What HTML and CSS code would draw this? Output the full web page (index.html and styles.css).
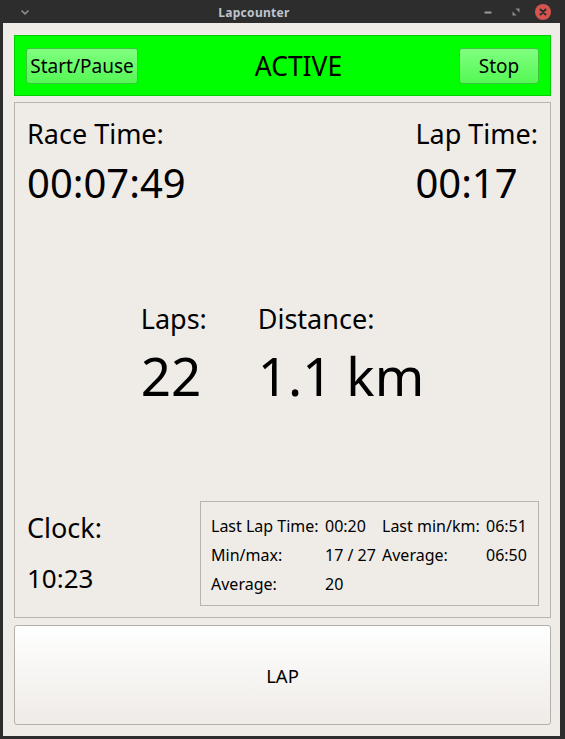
FILE: index.html
```html
<!DOCTYPE html>
<html>
<head>
<meta charset="utf-8">
<link rel="stylesheet" href="styles.css">
</head>
<body>
<div class="window">
  <div class="titlebar">
    <svg class="tb-menu" width="10" height="7" viewBox="0 0 10 7"><path d="M1.5 1.5 L5 4.8 L8.5 1.5" fill="none" stroke="#8e8e8e" stroke-width="1.6"/></svg>
    <div class="tb-title">Lapcounter</div>
    <div class="tb-controls">
      <svg class="ic-min" width="8" height="8" viewBox="0 0 8 8"><rect x="0.5" y="3.5" width="7" height="2" fill="#9c9c9c"/></svg>
      <svg class="ic-max" width="8" height="8" viewBox="0 0 8 8"><path d="M3.5 0.5 H7.5 V4.5 Z M0.5 3.5 V7.5 H4.5 Z" fill="#8c8c8c"/></svg>
      <svg class="ic-close" width="16" height="16" viewBox="0 0 16 16"><circle cx="8" cy="8" r="8" fill="#d65450"/><path d="M5.5 5.5 L10.5 10.5 M10.5 5.5 L5.5 10.5" stroke="#2e2e2e" stroke-width="2" stroke-linecap="round"/></svg>
    </div>
  </div>
  <div class="content">
    <div class="statusbar">
      <button class="gbtn">Start/Pause</button>
      <div class="status">ACTIVE</div>
      <button class="gbtn stop">Stop</button>
    </div>
    <div class="panel">
      <div class="toprow">
        <div class="block">
          <div class="label">Race Time:</div>
          <div class="bigval">00:07:49</div>
        </div>
        <div class="block">
          <div class="label">Lap Time:</div>
          <div class="bigval">00:17</div>
        </div>
      </div>
      <div class="midrow">
        <div class="mblock laps">
          <div class="label">Laps:</div>
          <div class="hugeval">22</div>
        </div>
        <div class="mblock">
          <div class="label">Distance:</div>
          <div class="hugeval">1.1 km</div>
        </div>
      </div>
      <div class="botrow">
        <div class="clock">
          <div class="label">Clock:</div>
          <div class="clockval">10:23</div>
        </div>
        <div class="stats">
          <span>Last Lap Time:</span><span>00:20</span><span>Last min/km:</span><span>06:51</span>
          <span>Min/max:</span><span>17 / 27</span><span>Average:</span><span>06:50</span>
          <span>Average:</span><span>20</span><span></span><span></span>
        </div>
      </div>
    </div>
    <button class="lap">LAP</button>
  </div>
</div>
</body>
</html>
```
FILE: styles.css
```css
html, body {
  margin: 0;
  padding: 0;
  background: #2d2d2d;
  width: 565px;
  height: 739px;
  overflow: hidden;
  font-family: "Noto Sans", "DejaVu Sans", sans-serif;
}
.window {
  margin-left: 3px;
  width: 557px;
}
.titlebar {
  height: 23px;
  position: relative;
  display: flex;
  align-items: center;
  justify-content: center;
  background: #2d2d2d;
}
.tb-menu {
  position: absolute;
  left: 17px;
  top: 9px;
}
.tb-title {
  color: #bec4cc;
  font-size: 12px;
  font-weight: bold;
  letter-spacing: 0.3px;
  margin-right: 55px;
  margin-top: 1px;
}
.tb-controls {
  position: absolute;
  right: 9px;
  top: 4px;
  display: flex;
  align-items: center;
}
.ic-min {
  margin-right: 20px;
}
.ic-max {
  margin-right: 15px;
}
.content {
  background: #efebe7;
  height: 713px;
  box-sizing: border-box;
  padding: 12px 9px 11px 11px;
  display: flex;
  flex-direction: column;
}
.statusbar {
  height: 61px;
  flex: none;
  box-sizing: border-box;
  background: #00ff00;
  border: 1px solid #00cc00;
  display: flex;
  align-items: center;
  justify-content: space-between;
  padding: 0 11px 0 11px;
}
.gbtn {
  height: 36px;
  margin-top: 1px;
  box-sizing: border-box;
  font-family: "Noto Sans", sans-serif;
  font-size: 19px;
  color: #000;
  background: linear-gradient(#80ff80, #55f855);
  border: 1px solid #3bc63b;
  border-radius: 3px;
  padding: 0 3px;
  width: 112px;
}
.gbtn.stop {
  width: 80px;
}
.status {
  font-size: 26.5px;
  color: #000;
}
.panel {
  margin-top: 6px;
  height: 516px;
  flex: none;
  box-sizing: border-box;
  border: 1px solid #b7b4b0;
  padding: 9px 12px 11px 12px;
  display: flex;
  flex-direction: column;
  justify-content: space-between;
}
.toprow {
  display: flex;
  justify-content: space-between;
}
.label {
  font-size: 27px;
  color: #000;
  line-height: 44px;
}
.bigval {
  font-size: 40px;
  line-height: 54px;
  color: #000;
}
.midrow {
  display: flex;
  justify-content: center;
  margin-bottom: 4px;
}
.mblock.laps {
  width: 117px;
}
.hugeval {
  font-size: 53px;
  line-height: 70px;
  color: #000;
}
.botrow {
  display: flex;
  justify-content: space-between;
  align-items: flex-end;
}
.clockval {
  font-size: 26px;
  line-height: 56px;
}
.stats {
  width: 339px;
  height: 105px;
  box-sizing: border-box;
  border: 1px solid #b7b4b0;
  display: grid;
  grid-template-columns: 114px 57px 104px auto;
  grid-auto-rows: 29px;
  align-content: center;
  padding: 3px 0 0 10px;
  font-size: 16px;
  color: #000;
  margin-right: -1px;
}
.stats span {
  line-height: 29px;
  white-space: nowrap;
}
.lap {
  margin-top: 7px;
  height: 100px;
  flex: none;
  box-sizing: border-box;
  border: 1px solid #b4b1ad;
  border-radius: 3px;
  background: linear-gradient(#ffffff, #efebe7);
  font-family: "Noto Sans", sans-serif;
  font-size: 18.5px;
  color: #000;
}
```
